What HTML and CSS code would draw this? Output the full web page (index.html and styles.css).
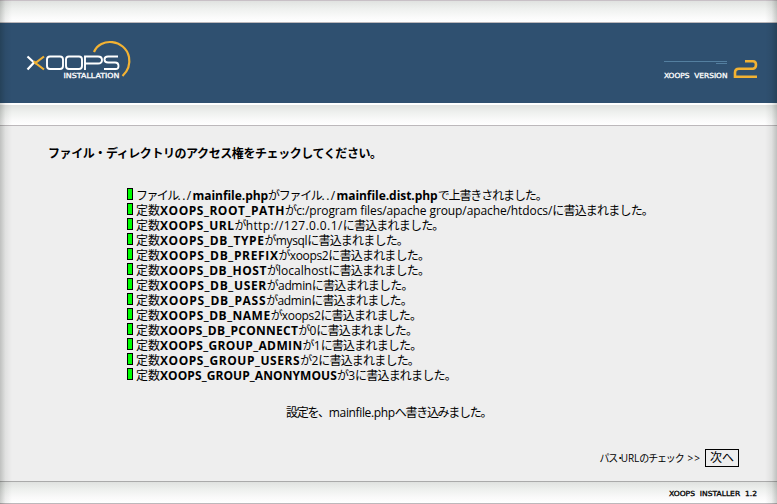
FILE: index.html
```html
<!DOCTYPE html>
<html lang="ja">
<head>
<meta charset="utf-8">
<title>XOOPS Installation</title>
<link rel="stylesheet" href="styles.css">
</head>
<body>
<div class="page">
<div class="strip top"></div>
<header>
<svg class="logo" width="115" height="50" viewBox="20 35 115 50">
<g fill="none" stroke-width="2.2">
<path d="M94 52C100 37 125 39 129 57Q131 68 122.500 76" stroke="#f2b233"/>
<path d="M27.500 56.500L34 62.500L27.500 69.500" stroke="#fff"/>
<path d="M44 56.500L35.500 63L44 69.500M34 61l2 3" stroke="#f2b233"/>
<path d="M50 56.500h10q3 0 3 3v6.500q0 3-3 3H50q-3 0-3-3v-6.500q0-3 3-3zM69 56.500h10q3 0 3 3v6.500q0 3-3 3H69q-3 0-3-3v-6.500q0-3 3-3zM85 70V56.500h13q4 0 4 3.500t-4 3.500H85M118 56.500h-10q-3.500 0-3.500 3t3.500 3h7q3.500 0 3.500 3.500t-3.500 3h-11" stroke="#fff" stroke-width="1.900"/>
</g>
<text x="63.500" y="78" textLength="56" lengthAdjust="spacingAndGlyphs" class="pixel">INSTALLATION</text>
</svg>
<svg class="version" width="100" height="26" viewBox="660 57 100 26">
<path d="M664 61.500h63M716 63.500h11" stroke="#547fa0"/>
<text x="664" y="78" textLength="63.500" lengthAdjust="spacingAndGlyphs" class="pixel" xml:space="preserve">XOOPS  VERSION</text>
<path d="M745 61.300h8q3 0 3 3.500t-3 4h-14q-4 0-4 4v4h22" fill="none" stroke="#f2b233" stroke-width="2.600"/>
</svg>
</header>
<div class="strip under"></div>
<main>
<h1>ファイル・ディレクトリのアクセス権をチェックしてください。</h1>
<ul>
<li><i></i><span class="f">ファイル</span><span class="d">../</span><b>mainfile.php</b><span class="g">がファイル</span><span class="d">../</span><b>mainfile.dist.php</b><span class="k">で上書きされました。</span></li>
<li><i></i>定数<b>XOOPS_ROOT_PATH</b><span class="k">が</span><span class="p">c:/program files/apache group/apache/htdocs/</span><span class="k">に書込まれました。</span></li>
<li><i></i>定数<b>XOOPS_URL</b><span class="k">が</span><span class="u">http://127.0.0.1/</span><span class="k">に書込まれました。</span></li>
<li><i></i>定数<b>XOOPS_DB_TYPE</b><span class="k">が</span><span class="a">mysql</span><span class="k">に書込まれました。</span></li>
<li><i></i>定数<b>XOOPS_DB_PREFIX</b><span class="k">が</span><span class="a">xoops2</span><span class="k">に書込まれました。</span></li>
<li><i></i>定数<b>XOOPS_DB_HOST</b><span class="k">が</span><span>localhost</span><span class="k">に書込まれました。</span></li>
<li><i></i>定数<b>XOOPS_DB_USER</b><span class="k">が</span><span class="a">admin</span><span class="k">に書込まれました。</span></li>
<li><i></i>定数<b>XOOPS_DB_PASS</b><span class="k">が</span><span class="a">admin</span><span class="k">に書込まれました。</span></li>
<li><i></i>定数<b>XOOPS_DB_NAME</b><span class="k">が</span><span class="a">xoops2</span><span class="k">に書込まれました。</span></li>
<li><i></i>定数<b>XOOPS_DB_PCONNECT</b><span class="k">が</span><span>0</span><span class="k">に書込まれました。</span></li>
<li><i></i>定数<b>XOOPS_GROUP_ADMIN</b><span class="k">が</span><span>1</span><span class="k">に書込まれました。</span></li>
<li><i></i>定数<b>XOOPS_GROUP_USERS</b><span class="k">が</span><span>2</span><span class="k">に書込まれました。</span></li>
<li><i></i>定数<b>XOOPS_GROUP_ANONYMOUS</b><span class="k">が</span><span>3</span><span class="k">に書込まれました。</span></li>
</ul>
<p class="done"><span class="k">設定を、</span><span class="a">mainfile.php</span><span class="k">へ書き込みました。</span></p>
<div class="next"><span class="label">パス<span class="dot">・</span><span class="url">URL</span>のチェック</span><span class="arrows">&gt;&gt;</span><button>次へ</button></div>
</main>
<footer class="strip">
<svg width="96" height="16" viewBox="664 486 96 16"><text x="669" y="496" textLength="88" lengthAdjust="spacingAndGlyphs" class="pixel dark" xml:space="preserve">XOOPS  INSTALLER  1.2</text></svg>
</footer>
<div class="shade left"></div>
<div class="shade right"></div>
</div>
</body>
</html>
```
FILE: styles.css
```css
* { box-sizing: border-box; }
body { margin: 0; background: #eee; color: #000; font: 12px/15px "Open Sans", "Noto Sans CJK JP", sans-serif; }
.page { position: relative; width: 777px; height: 504px; overflow: hidden; display: flex; flex-direction: column; }
.strip { flex: none; background: linear-gradient(#e0e2e0, #eef0ee 35%, #fafafa 75%, #fff); border-bottom: 1px solid #bcb8bb; }
.top { height: 23px; border-top: 1px solid #c8c0c6; }
header { flex: none; height: 80px; background: #2f5070; display: flex; justify-content: space-between; align-items: flex-start; padding: 12px 17px 0 20px; }
.logo { display: block; }
.version { display: block; margin-top: 22px; }
.pixel { font: 7px "DejaVu Sans", sans-serif; fill: #fff; stroke: #fff; stroke-width: .3px; }
.dark { fill: #000; stroke: #000; }
.under { height: 23px; border-top: 2px solid #fff; }
main { flex: none; height: 355px; padding: 19px 38px 0 48px; display: flex; flex-direction: column; }
h1 { margin: 0; font: bold 12px/15px "Noto Sans CJK JP", sans-serif; letter-spacing: -.42px; }
ul { list-style: none; margin: 28px 0 0 79px; padding: 0; }
li { height: 15px; display: flex; white-space: pre; }
li i { flex: none; width: 6px; height: 12px; margin: 0 3px 0 0; background: #0f0; border: 1px solid #000; }
.k { letter-spacing: -.8px; }
.f { letter-spacing: -1.6px; }
.g { letter-spacing: -1.3px; }
.d { letter-spacing: 1.4px; }
.p { letter-spacing: -.1px; }
.u { letter-spacing: .4px; }
.a { letter-spacing: -.35px; }
li:nth-child(1) b { letter-spacing: -.05px; }
li:nth-child(1) .k { letter-spacing: -1.1px; }
li:nth-child(2) b { letter-spacing: .53px; }
li:nth-child(3) b { letter-spacing: .5px; }
li:nth-child(4) b { letter-spacing: .6px; }
li:nth-child(5) b { letter-spacing: .65px; }
li:nth-child(6) b { letter-spacing: .5px; }
li:nth-child(7) b { letter-spacing: .65px; }
li:nth-child(8) b { letter-spacing: .7px; }
li:nth-child(9) b { letter-spacing: .5px; }
li:nth-child(10) b { letter-spacing: .27px; }
li:nth-child(11) b { letter-spacing: .38px; }
li:nth-child(12) b { letter-spacing: .55px; }
li:nth-child(13) b { letter-spacing: .08px; }
.done { margin: 22px 0 0 238px; white-space: pre; display: flex; }
.done .k { letter-spacing: -1.3px; }
.next { display: flex; justify-content: flex-end; align-items: center; margin-top: 29px; }
.label { font-size: 10px; letter-spacing: -1.15px; margin-right: 4px; }
.dot { letter-spacing: -4.5px; margin-left: -2px; }
.url { letter-spacing: 0; }
.arrows { font-size: 10px; letter-spacing: 1px; margin-right: 4px; }
button { width: 34px; height: 18px; padding: 0 0 2px; background: #eee; border: 1px solid #000; border-radius: 0; color: #000; font: 12px/14px "Noto Sans CJK JP", sans-serif; }
footer { height: 23px; border-top: 1px solid #aaa; display: flex; justify-content: flex-end; padding: 4px 17px 0 0; }
.shade { position: absolute; top: 0; bottom: 0; width: 12px; }
.left { left: 0; background: linear-gradient(90deg, rgba(0,10,0,.2), rgba(0,10,0,.06) 45%, transparent); }
.right { right: 0; background: linear-gradient(270deg, rgba(0,10,0,.2), rgba(0,10,0,.06) 45%, transparent); }
```
